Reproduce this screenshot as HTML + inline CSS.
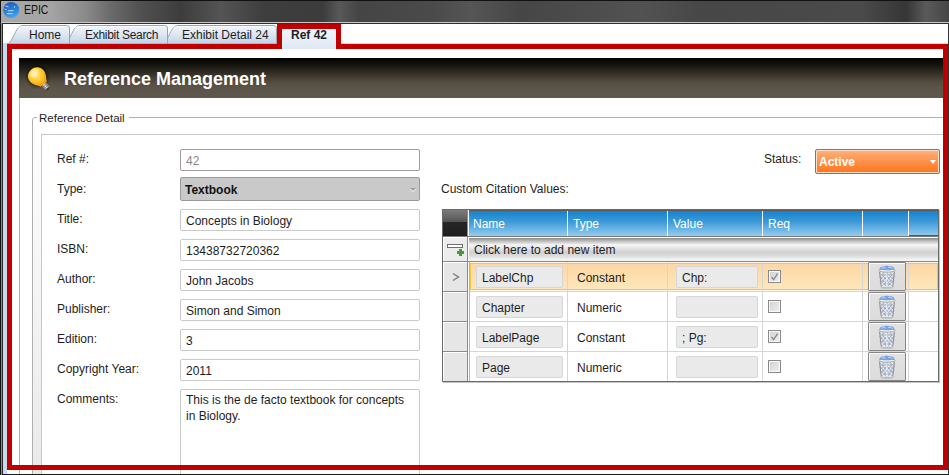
<!DOCTYPE html>
<html><head><meta charset="utf-8">
<style>
*{margin:0;padding:0;box-sizing:border-box}
html,body{width:949px;height:475px;overflow:hidden;background:#fff;font-family:"Liberation Sans",sans-serif;font-size:12px;color:#1e1e1e;line-height:14px}
.a{position:absolute}
#title{left:0;top:0;width:949px;height:24px;background:linear-gradient(90deg,#a8a8a8 0,#a4a4a4 50px,#8a8a8a 85px,#6a6a6a 110px,#505050 140px,#3d3d3d 180px,#545454 220px,#3e3e3e 262px,#3c3c3c 322px,#585858 338px,#454545 358px,#4a4a4a 430px,#555 470px,#464646 520px,#525252 640px,#474747 700px,#4a4a4a 860px,#363636 905px,#5a5a5a 925px,#444 949px);border-top:1px solid #111;border-left:1px solid #111}
.lbl{left:57px}
.tb{left:180px;width:240px;height:22px;border:1px solid #cacaca;border-radius:2px;background:#fff;padding:4px 0 0 5px}
#clip{left:0;top:0;width:949px;height:475px;clip-path:inset(49px 6px 1px 12px)}
.gl{background:#d6d6d6}
.cbox{height:22px;border:1px solid #d6d6d6;border-radius:2px;background:#eaeaea;padding:4px 0 0 5px}
.chk{width:13px;height:13px;border:1px solid #8a8a8a;background:linear-gradient(135deg,#d0d0d0,#f0f0f0);box-shadow:inset 0 0 0 1px #f8f8f8}
.btn{width:38px;height:29px;border:1px solid #858585;border-radius:1px;background:linear-gradient(#e2e2e2,#dcdcdc);box-shadow:inset 1px 1px 0 #fafafa}
.rh{left:443px;width:24px;height:29px;background:#e6e6e6;border-top:1px solid #fff;border-left:1px solid #fff}
</style></head><body>
<div id="title" class="a"></div>
<svg class="a" style="left:2px;top:1px" width="18" height="18" viewBox="0 0 18 18">
<defs><linearGradient id="gb" x1="0.3" y1="0" x2="0.6" y2="1"><stop offset="0" stop-color="#1a5fbc"/><stop offset="0.6" stop-color="#2f86da"/><stop offset="1" stop-color="#4aa6ee"/></linearGradient></defs>
<circle cx="9.2" cy="9" r="8" fill="url(#gb)"/>
<path d="M3.5,5.2 C4.5,5 5.5,5.3 6.5,5.8 M2.6,7.8 C3.2,8.2 3.8,8.6 4.6,8.8 M6,9.8 L11.5,9.6 M5,12.6 L10.5,12.6" stroke="#e8f2fc" stroke-width="0.9" fill="none" opacity="0.85"/>
<circle cx="12.5" cy="6" r="0.7" fill="#e8f2fc" opacity="0.8"/>
</svg>
<div class="a" style="left:24px;top:3px;font-size:12px;color:#111;transform:scaleX(0.87);transform-origin:0 0">EPIC</div>
<div class="a" style="left:0;top:23px;width:949px;height:452px;background:#fff;border-left:1px solid #111;border-bottom:1px solid #1a1a1a;border-top:1px solid #555;border-right:1px solid #333"></div><div class="a" style="left:1px;top:22px;width:1px;height:453px;background:#8a8a8a"></div><div class="a" style="left:2px;top:22px;width:1px;height:452px;background:#2a2a2a"></div>
<div class="a" style="left:1px;top:22px;width:948px;height:1px;background:#c8c8c8"></div><div class="a" style="left:2px;top:23px;width:946px;height:1px;background:#2e2e2e"></div>
<div class="a" style="left:3px;top:43px;width:4px;height:431px;background:#c9daf0"></div>
<div class="a" style="left:7px;top:43px;width:941px;height:1px;background:#c9daf0"></div>
<!-- tabs -->
<svg class="a" style="left:0;top:0" width="949" height="50">
<defs><linearGradient id="tg" x1="0" y1="0" x2="0" y2="1"><stop offset="0" stop-color="#f2f6fb"/><stop offset="0.45" stop-color="#dfe8f2"/><stop offset="0.9" stop-color="#c7d7ea"/><stop offset="1" stop-color="#b8cfe6"/></linearGradient></defs>
<path d="M162,44 C166,43.5 169,34 172,29.5 C174,26.5 175.5,25.5 178,25.5 L273.5,25.5 Q276.5,25.5 276.5,28 L276.5,44 Z" fill="url(#tg)" stroke="#9ba2aa" stroke-width="1"/><path d="M173,28.5 C174.5,27 176,26.5 178,26.5 L273.5,26.5" fill="none" stroke="#fafcff" stroke-width="1"/><path d="M64,44 C68,43.5 71,34 74,29.5 C76,26.5 77.5,25.5 80,25.5 L164.5,25.5 Q167.5,25.5 167.5,28 L167.5,44 Z" fill="url(#tg)" stroke="#9ba2aa" stroke-width="1"/><path d="M75,28.5 C76.5,27 78,26.5 80,26.5 L164.5,26.5" fill="none" stroke="#fafcff" stroke-width="1"/><path d="M7,44 C11,43.5 14,34 17,29.5 C19,26.5 20.5,25.5 23,25.5 L66.5,25.5 Q69.5,25.5 69.5,28 L69.5,44 Z" fill="url(#tg)" stroke="#9ba2aa" stroke-width="1"/><path d="M18,28.5 C19.5,27 21,26.5 23,26.5 L66.5,26.5" fill="none" stroke="#fafcff" stroke-width="1"/>
</svg>
<div class="a" style="left:29px;top:28px">Home</div>
<div class="a" style="left:85px;top:28px;letter-spacing:-0.3px">Exhibit Search</div>
<div class="a" style="left:182px;top:28px">Exhibit Detail 24</div>

<div id="clip" class="a">
<!-- header -->
<div class="a" style="left:19px;top:58px;width:930px;height:40px;background:linear-gradient(#000 0,#0a0906 8%,#1c1a14 22%,#3a342a 42%,#544c40 60%,#5c5549 75%,#5f584d 100%)"></div>
<svg class="a" style="left:19px;top:58px" width="40" height="39" viewBox="0 0 40 39">
<defs><radialGradient id="bulb" cx="0.5" cy="0.3" r="0.7"><stop offset="0" stop-color="#ffeea0"/><stop offset="0.45" stop-color="#ffd23c"/><stop offset="1" stop-color="#f29c00"/></radialGradient>
<radialGradient id="halo" cx="0.5" cy="0.5" r="0.5"><stop offset="0.6" stop-color="#000" stop-opacity="0.45"/><stop offset="1" stop-color="#000" stop-opacity="0"/></radialGradient>
<linearGradient id="metal" x1="0" y1="0" x2="1" y2="0"><stop offset="0" stop-color="#5a5a5a"/><stop offset="0.5" stop-color="#e8e8e8"/><stop offset="1" stop-color="#6a6a6a"/></linearGradient></defs>
<circle cx="18.5" cy="18.5" r="13" fill="url(#halo)"/>
<g transform="translate(18 18.2) rotate(-40)">
<path d="M-8.8,0 C-8.8,-5.5 -5,-8.8 0,-8.8 C5,-8.8 8.8,-5.5 8.8,0 C8.8,4 6,6.5 4,10.5 L-4,10.5 C-6,6.5 -8.8,4 -8.8,0 Z" fill="url(#bulb)"/>
<ellipse cx="0" cy="-4" rx="5" ry="3.5" fill="#fff6c8" opacity="0.5"/>
<rect x="-3.2" y="10.3" width="6.4" height="5.5" fill="url(#metal)"/>
<path d="M-3.2,12.2 L3.2,12.2 M-3.2,14.1 L3.2,14.1" stroke="#666" stroke-width="0.6"/>
<path d="M-2,15.8 L2,15.8 L1,17.6 L-1,17.6 Z" fill="#3a3a3a"/>
</g>
</svg>
<div class="a" style="left:64px;top:69px;font-size:18px;line-height:20px;font-weight:bold;color:#fff">Reference Management</div>
<div class="a" style="left:19px;top:98px;width:1px;height:377px;background:#b0b0b0"></div>
<!-- groupbox -->
<div class="a" style="left:32px;top:117px;width:930px;height:370px;border:1px solid #b0b0b0;border-radius:3px;background:linear-gradient(#fff,#fafafa 20%,#e9e9e9)"></div>
<div class="a" style="left:37px;top:110px;width:92px;height:14px;background:#fff"></div>
<div class="a" style="left:39px;top:111px;font-size:11.5px">Reference Detail</div>
<div class="a" style="left:41px;top:134px;width:920px;height:350px;border:1px solid #c8c8c8;background:#fff"></div>

<!-- form -->
<div class="a tb" style="top:149px;border-color:#9c9c9c;color:#8a8a8a">42</div>
<div class="a" style="left:180px;top:177px;width:240px;height:24px;border:1px solid #9a9a9a;border-radius:2px;background:#c9c9c9;padding:5px 0 0 4px;font-weight:bold;color:#111">Textbook</div>
<div class="a" style="left:410px;top:189px;width:0;height:0;border-left:3px solid transparent;border-right:3px solid transparent;border-top:3px solid #fff"></div>
<div class="a" style="left:410px;top:188px;width:0;height:0;border-left:3px solid transparent;border-right:3px solid transparent;border-top:3px solid #9a9a9a"></div>
<div class="a lbl" style="top:152px">Ref #:</div>
<div class="a lbl" style="top:182px">Type:</div>
<div class="a lbl" style="top:212px">Title:</div>
<div class="a tb" style="top:209px">Concepts in Biology</div>
<div class="a lbl" style="top:242px">ISBN:</div>
<div class="a tb" style="top:239px">13438732720362</div>
<div class="a lbl" style="top:272px">Author:</div>
<div class="a tb" style="top:269px">John Jacobs</div>
<div class="a lbl" style="top:302px">Publisher:</div>
<div class="a tb" style="top:299px">Simon and Simon</div>
<div class="a lbl" style="top:332px">Edition:</div>
<div class="a tb" style="top:329px">3</div>
<div class="a lbl" style="top:362px">Copyright Year:</div>
<div class="a tb" style="top:359px">2011</div>
<div class="a lbl" style="top:392px">Comments:</div>

<div class="a tb" style="top:389px;height:100px;padding-top:2px;line-height:16px">This is the de facto textbook for concepts<br>in Biology.</div>

<!-- status -->
<div class="a" style="left:764px;top:152px">Status:</div>
<div class="a" style="left:815px;top:149px;width:125px;height:25px;border:1px solid #7a7a7a;border-radius:2px;box-shadow:inset 0 0 0 1px #fde0cc;background:linear-gradient(#ffb37e,#ff9450 45%,#ff7418);padding:5px 0 0 3px;font-weight:bold;color:#fff">Active</div>
<div class="a" style="left:930px;top:160px;width:0;height:0;border-left:3px solid transparent;border-right:3px solid transparent;border-top:4px solid #fff"></div>

<div class="a" style="left:441px;top:182px">Custom Citation Values:</div>

<!-- grid -->
<div class="a" style="left:442px;top:209px;width:497px;height:173px;border:1px solid #6a6a6a;background:#fff"></div><div class="a" style="left:443px;top:382px;width:497px;height:1px;background:#c4c4c4"></div><div class="a" style="left:939px;top:210px;width:1px;height:172px;background:#c4c4c4"></div>
<div class="a" style="left:443px;top:210px;width:24px;height:26px;background:linear-gradient(#7c7c7c,#555 45%,#262626 47%,#1e1e1e 100%)"></div>
<div class="a" style="left:467px;top:210px;width:1px;height:171px;background:#8a8a8a"></div>
<div class="a" style="left:469px;top:210px;width:469px;height:26px;background:linear-gradient(#5a5a5a 0,#5a5a5a 1px,#1482cc 1px,#3d9ad8 45%,#94ccee)"></div>
<div class="a" style="left:567px;top:211px;width:1px;height:25px;background:#fff"></div>
<div class="a" style="left:667px;top:211px;width:1px;height:25px;background:#fff"></div>
<div class="a" style="left:762px;top:211px;width:1px;height:25px;background:#fff"></div>
<div class="a" style="left:862px;top:211px;width:1px;height:25px;background:#fff"></div>
<div class="a" style="left:908px;top:211px;width:1px;height:25px;background:#fff"></div>
<div class="a" style="left:473px;top:217px;color:#fff">Name</div>
<div class="a" style="left:573px;top:217px;color:#fff">Type</div>
<div class="a" style="left:673px;top:217px;color:#fff">Value</div>
<div class="a" style="left:768px;top:217px;color:#fff">Req</div>
<div class="a" style="left:443px;top:236px;width:495px;height:1px;background:#7a7a7a"></div>
<div class="a" style="left:909px;top:235px;width:29px;height:1px;background:#555"></div>
<!-- add row -->
<div class="a" style="left:443px;top:237px;width:24px;height:24px;background:#ececec;border-top:1px solid #fff;border-left:1px solid #fff"></div>
<div class="a" style="left:469px;top:237px;width:469px;height:24px;background:#fff"></div><div class="a" style="left:469px;top:238px;width:469px;height:23px;background:linear-gradient(#8a8a8a,#bcbcbc 13%,#f6f6f6 30%,#e4e4e4 45%,#d0d0d0 62%,#dcdcdc 78%,#f4f6f6 95%,#f0f0f0)"></div>
<div class="a" style="left:447px;top:244px;width:16px;height:4px;border:1px solid #6e6e6e;background:#fff"></div>
<div class="a" style="left:457px;top:251px;width:7px;height:3px;background:#3a9e3a"></div>
<div class="a" style="left:459px;top:249px;width:3px;height:7px;background:#3a9e3a"></div>
<div class="a" style="left:474px;top:243px">Click here to add new item</div>
<div class="a" style="left:443px;top:261px;width:495px;height:1px;background:#8a8a8a"></div>

<!-- rows -->
<div class="a" style="left:469px;top:262px;width:469px;height:29px;background:linear-gradient(#fdd6a4,#fde8bc);border:1px solid #fff8e8"></div>
<div class="a" style="left:470px;top:263px;width:468px;height:27px;border:1.5px solid #f5c443"></div>
<div class="a gl" style="left:469px;top:291px;width:469px;height:1px"></div>
<div class="a gl" style="left:469px;top:321px;width:469px;height:1px"></div>
<div class="a gl" style="left:469px;top:351px;width:469px;height:1px"></div>
<div class="a" style="left:443px;top:291px;width:24px;height:1px;background:#8a8a8a"></div>
<div class="a" style="left:443px;top:321px;width:24px;height:1px;background:#8a8a8a"></div>
<div class="a" style="left:443px;top:351px;width:24px;height:1px;background:#8a8a8a"></div>
<div class="a" style="left:469px;top:262px;width:1px;height:119px;background:#b4b4b4"></div>
<div class="a gl" style="left:567px;top:262px;width:1px;height:119px"></div>
<div class="a gl" style="left:667px;top:262px;width:1px;height:119px"></div>
<div class="a gl" style="left:762px;top:262px;width:1px;height:119px"></div>
<div class="a gl" style="left:862px;top:262px;width:1px;height:119px"></div>
<div class="a gl" style="left:908px;top:262px;width:1px;height:119px"></div>
<div class="a rh" style="top:262px"></div>
<div class="a cbox" style="left:476px;top:266px;width:87px">LabelChp</div>
<div class="a" style="left:577px;top:271px">Constant</div>
<div class="a cbox" style="left:676px;top:266px;width:82px">Chp:</div>
<div class="a chk" style="left:768px;top:270px"></div><svg class="a" style="left:768px;top:270px" width="13" height="13"><path d="M3.5,6.8 L5.6,9.6 L9.6,3.6" fill="none" stroke="#8a8a8a" stroke-width="1.4"/></svg>
<div class="a btn" style="left:868px;top:262px"></div>
<svg class="a" style="left:877px;top:265px" width="20" height="25" viewBox="0 0 20 25">
<path d="M2.3,6.5 L17.7,6.5 L16,22 L4,22 Z" fill="#e4e8ee"/>
<path d="M3,8 L15,21 M6,7.5 L17,19 M9.5,7.5 L17.5,15.5 M13,7.5 L17.7,12 M2.5,11 L12,21 M3,15 L9,21 M17,8 L5,21 M14,7.5 L3,19 M10.5,7.5 L2.5,15.5 M7,7.5 L2.3,12 M17.5,11 L8,21 M17,15 L11,21" stroke="#a9aeb6" stroke-width="0.7"/>
<g fill="#6d8fd2"><circle cx="6" cy="10" r="0.8"/><circle cx="10" cy="10" r="0.8"/><circle cx="14" cy="10" r="0.8"/>
<circle cx="8" cy="13" r="0.8"/><circle cx="12" cy="13" r="0.8"/><circle cx="4.5" cy="13" r="0.6"/><circle cx="15.5" cy="13" r="0.6"/>
<circle cx="6" cy="16" r="0.8"/><circle cx="10" cy="16" r="0.8"/><circle cx="14" cy="16" r="0.8"/>
<circle cx="8" cy="19" r="0.8"/><circle cx="12" cy="19" r="0.8"/></g>
<path d="M9.5,8 L10,21" stroke="#f4f6fa" stroke-width="1.2" opacity="0.7"/>
<path d="M2.6,7 L4.3,21.8 M17.4,7 L15.7,21.8" stroke="#8f8f8f" stroke-width="1.1"/>
<ellipse cx="10" cy="5.6" rx="8.3" ry="1.5" fill="#f3f1ea" stroke="#9a9a9a" stroke-width="0.8"/>
<path d="M2.2,4.8 C2.8,2 4.5,1.2 6.5,1.5 C8,0.5 11.5,0.4 13,1.3 C15,1 17.2,2 17.8,4.8 C14,5.4 6,5.4 2.2,4.8 Z" fill="#78a2e4"/>
<path d="M4.5,3.2 C6,2.4 7.5,2.6 8.5,3 M11,2.4 C12.5,2 14,2.4 15.5,3.6" stroke="#d4e4fb" stroke-width="0.9" fill="none"/>
<ellipse cx="10" cy="22.8" rx="6.5" ry="1" fill="#bdbdbd"/>
</svg>
<div class="a rh" style="top:292px"></div>
<div class="a cbox" style="left:476px;top:296px;width:87px">Chapter</div>
<div class="a" style="left:577px;top:301px">Numeric</div>
<div class="a cbox" style="left:676px;top:296px;width:82px"></div>
<div class="a chk" style="left:768px;top:300px"></div>
<div class="a btn" style="left:868px;top:292px"></div>
<svg class="a" style="left:877px;top:295px" width="20" height="25" viewBox="0 0 20 25">
<path d="M2.3,6.5 L17.7,6.5 L16,22 L4,22 Z" fill="#e4e8ee"/>
<path d="M3,8 L15,21 M6,7.5 L17,19 M9.5,7.5 L17.5,15.5 M13,7.5 L17.7,12 M2.5,11 L12,21 M3,15 L9,21 M17,8 L5,21 M14,7.5 L3,19 M10.5,7.5 L2.5,15.5 M7,7.5 L2.3,12 M17.5,11 L8,21 M17,15 L11,21" stroke="#a9aeb6" stroke-width="0.7"/>
<g fill="#6d8fd2"><circle cx="6" cy="10" r="0.8"/><circle cx="10" cy="10" r="0.8"/><circle cx="14" cy="10" r="0.8"/>
<circle cx="8" cy="13" r="0.8"/><circle cx="12" cy="13" r="0.8"/><circle cx="4.5" cy="13" r="0.6"/><circle cx="15.5" cy="13" r="0.6"/>
<circle cx="6" cy="16" r="0.8"/><circle cx="10" cy="16" r="0.8"/><circle cx="14" cy="16" r="0.8"/>
<circle cx="8" cy="19" r="0.8"/><circle cx="12" cy="19" r="0.8"/></g>
<path d="M9.5,8 L10,21" stroke="#f4f6fa" stroke-width="1.2" opacity="0.7"/>
<path d="M2.6,7 L4.3,21.8 M17.4,7 L15.7,21.8" stroke="#8f8f8f" stroke-width="1.1"/>
<ellipse cx="10" cy="5.6" rx="8.3" ry="1.5" fill="#f3f1ea" stroke="#9a9a9a" stroke-width="0.8"/>
<path d="M2.2,4.8 C2.8,2 4.5,1.2 6.5,1.5 C8,0.5 11.5,0.4 13,1.3 C15,1 17.2,2 17.8,4.8 C14,5.4 6,5.4 2.2,4.8 Z" fill="#78a2e4"/>
<path d="M4.5,3.2 C6,2.4 7.5,2.6 8.5,3 M11,2.4 C12.5,2 14,2.4 15.5,3.6" stroke="#d4e4fb" stroke-width="0.9" fill="none"/>
<ellipse cx="10" cy="22.8" rx="6.5" ry="1" fill="#bdbdbd"/>
</svg>
<div class="a rh" style="top:322px"></div>
<div class="a cbox" style="left:476px;top:326px;width:87px">LabelPage</div>
<div class="a" style="left:577px;top:331px">Constant</div>
<div class="a cbox" style="left:676px;top:326px;width:82px">; Pg:</div>
<div class="a chk" style="left:768px;top:330px"></div><svg class="a" style="left:768px;top:330px" width="13" height="13"><path d="M3.5,6.8 L5.6,9.6 L9.6,3.6" fill="none" stroke="#8a8a8a" stroke-width="1.4"/></svg>
<div class="a btn" style="left:868px;top:322px"></div>
<svg class="a" style="left:877px;top:325px" width="20" height="25" viewBox="0 0 20 25">
<path d="M2.3,6.5 L17.7,6.5 L16,22 L4,22 Z" fill="#e4e8ee"/>
<path d="M3,8 L15,21 M6,7.5 L17,19 M9.5,7.5 L17.5,15.5 M13,7.5 L17.7,12 M2.5,11 L12,21 M3,15 L9,21 M17,8 L5,21 M14,7.5 L3,19 M10.5,7.5 L2.5,15.5 M7,7.5 L2.3,12 M17.5,11 L8,21 M17,15 L11,21" stroke="#a9aeb6" stroke-width="0.7"/>
<g fill="#6d8fd2"><circle cx="6" cy="10" r="0.8"/><circle cx="10" cy="10" r="0.8"/><circle cx="14" cy="10" r="0.8"/>
<circle cx="8" cy="13" r="0.8"/><circle cx="12" cy="13" r="0.8"/><circle cx="4.5" cy="13" r="0.6"/><circle cx="15.5" cy="13" r="0.6"/>
<circle cx="6" cy="16" r="0.8"/><circle cx="10" cy="16" r="0.8"/><circle cx="14" cy="16" r="0.8"/>
<circle cx="8" cy="19" r="0.8"/><circle cx="12" cy="19" r="0.8"/></g>
<path d="M9.5,8 L10,21" stroke="#f4f6fa" stroke-width="1.2" opacity="0.7"/>
<path d="M2.6,7 L4.3,21.8 M17.4,7 L15.7,21.8" stroke="#8f8f8f" stroke-width="1.1"/>
<ellipse cx="10" cy="5.6" rx="8.3" ry="1.5" fill="#f3f1ea" stroke="#9a9a9a" stroke-width="0.8"/>
<path d="M2.2,4.8 C2.8,2 4.5,1.2 6.5,1.5 C8,0.5 11.5,0.4 13,1.3 C15,1 17.2,2 17.8,4.8 C14,5.4 6,5.4 2.2,4.8 Z" fill="#78a2e4"/>
<path d="M4.5,3.2 C6,2.4 7.5,2.6 8.5,3 M11,2.4 C12.5,2 14,2.4 15.5,3.6" stroke="#d4e4fb" stroke-width="0.9" fill="none"/>
<ellipse cx="10" cy="22.8" rx="6.5" ry="1" fill="#bdbdbd"/>
</svg>
<div class="a rh" style="top:352px"></div>
<div class="a cbox" style="left:476px;top:356px;width:87px">Page</div>
<div class="a" style="left:577px;top:361px">Numeric</div>
<div class="a cbox" style="left:676px;top:356px;width:82px"></div>
<div class="a chk" style="left:768px;top:360px"></div>
<div class="a btn" style="left:868px;top:352px"></div>
<svg class="a" style="left:877px;top:355px" width="20" height="25" viewBox="0 0 20 25">
<path d="M2.3,6.5 L17.7,6.5 L16,22 L4,22 Z" fill="#e4e8ee"/>
<path d="M3,8 L15,21 M6,7.5 L17,19 M9.5,7.5 L17.5,15.5 M13,7.5 L17.7,12 M2.5,11 L12,21 M3,15 L9,21 M17,8 L5,21 M14,7.5 L3,19 M10.5,7.5 L2.5,15.5 M7,7.5 L2.3,12 M17.5,11 L8,21 M17,15 L11,21" stroke="#a9aeb6" stroke-width="0.7"/>
<g fill="#6d8fd2"><circle cx="6" cy="10" r="0.8"/><circle cx="10" cy="10" r="0.8"/><circle cx="14" cy="10" r="0.8"/>
<circle cx="8" cy="13" r="0.8"/><circle cx="12" cy="13" r="0.8"/><circle cx="4.5" cy="13" r="0.6"/><circle cx="15.5" cy="13" r="0.6"/>
<circle cx="6" cy="16" r="0.8"/><circle cx="10" cy="16" r="0.8"/><circle cx="14" cy="16" r="0.8"/>
<circle cx="8" cy="19" r="0.8"/><circle cx="12" cy="19" r="0.8"/></g>
<path d="M9.5,8 L10,21" stroke="#f4f6fa" stroke-width="1.2" opacity="0.7"/>
<path d="M2.6,7 L4.3,21.8 M17.4,7 L15.7,21.8" stroke="#8f8f8f" stroke-width="1.1"/>
<ellipse cx="10" cy="5.6" rx="8.3" ry="1.5" fill="#f3f1ea" stroke="#9a9a9a" stroke-width="0.8"/>
<path d="M2.2,4.8 C2.8,2 4.5,1.2 6.5,1.5 C8,0.5 11.5,0.4 13,1.3 C15,1 17.2,2 17.8,4.8 C14,5.4 6,5.4 2.2,4.8 Z" fill="#78a2e4"/>
<path d="M4.5,3.2 C6,2.4 7.5,2.6 8.5,3 M11,2.4 C12.5,2 14,2.4 15.5,3.6" stroke="#d4e4fb" stroke-width="0.9" fill="none"/>
<ellipse cx="10" cy="22.8" rx="6.5" ry="1" fill="#bdbdbd"/>
</svg>

<svg class="a" style="left:450px;top:271px" width="12" height="12"><path d="M3,2.5 L8.5,6 L3,9.5" fill="none" stroke="#7c7c7c" stroke-width="1.4"/></svg>
</div>

<!-- red outline -->
<div class="a" style="left:7px;top:44px;width:941px;height:426px;border:5px solid #c00000"></div>
<div class="a" style="left:277px;top:24px;width:64px;height:25px;border:5px solid #c00000;border-bottom:none;background:linear-gradient(#f3f6fb,#dfe8f4)"></div>
<div class="a" style="left:291px;top:28px;font-weight:bold;font-size:12px">Ref 42</div>
</body></html>
